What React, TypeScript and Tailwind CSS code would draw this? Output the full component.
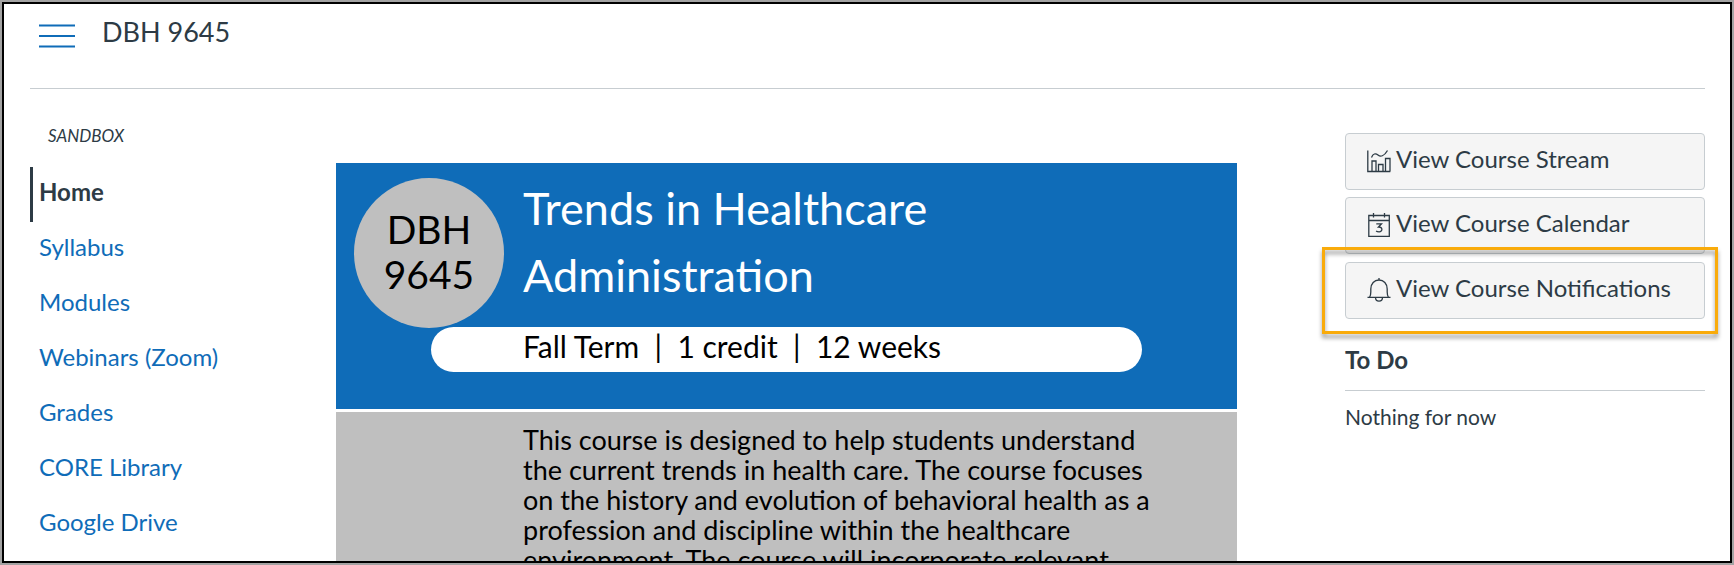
const navItems = ["Home", "Syllabus", "Modules", "Webinars (Zoom)", "Grades", "CORE Library", "Google Drive"];

export default function App() {
  return (
    <div className="h-screen overflow-hidden border-2 border-[#a3a3a3] bg-white font-['Lato',sans-serif] text-[#2d3b45]">
      <div className="h-full overflow-hidden border-2 border-black pl-[26px] pr-[25px]">
        {/* Header */}
        <header className="flex h-[85px] items-start gap-[27px] border-b border-[#c7cdd1] pl-[9px] pt-3">
          <button type="button" aria-label="Toggle course navigation" className="mt-2 h-6 w-9 text-[#0f6cb8]">
            <svg viewBox="0 0 36 24" className="h-6 w-9" stroke="currentColor" strokeWidth="2">
              <path d="M0 1.5h36M0 12h36M0 22.5h36" />
            </svg>
          </button>
          <h1 className="text-[27px] leading-8">DBH 9645</h1>
        </header>

        <div className="flex">
          <CourseNav />
          <main className="mt-[74px] min-w-0 flex-1 text-black">
            <Banner />
            <div className="mt-[3px] bg-[#bfbfbf] pb-6 pl-[187px] pr-[75px] pt-[13px]">
              <p className="text-[27px] leading-[30px]">
                This course is designed to help students understand the current trends in health care. The course
                focuses on the history and evolution of behavioral health as a profession and discipline within the
                healthcare environment. The course will incorporate relevant
              </p>
            </div>
          </main>
          <Sidebar />
        </div>
      </div>
    </div>
  );
}

function CourseNav() {
  return (
    <nav className="w-[306px] shrink-0 pt-[35px]">
      <p className="mb-[19px] pl-[18px] text-[17px] italic leading-6">SANDBOX</p>
      <ul>
        {navItems.map((item, i) => (
          <li key={item}>
            <a href="#" aria-current={i === 0 ? "page" : undefined}
              className={`block border-l-[3px] pl-1.5 pb-1.5 text-2xl leading-[49px] ${i === 0 ? "border-[#2d3b45] font-bold text-[#2d3b45]" : "border-transparent text-[#0f6cb8]"}`}>
              {item}
            </a>
          </li>
        ))}
      </ul>
    </nav>
  );
}

function Banner() {
  return (
    <section className="bg-[#0f6cb8] pb-[37px]">
      <div className="flex gap-[19px] pl-[18px]">
        <div className="mt-[15px] flex size-[150px] shrink-0 items-center justify-center rounded-full bg-[#bfbfbf] pb-0.5 text-center text-[39px] leading-[45px]">
          DBH<br />9645
        </div>
        <h2 className="max-w-[500px] pt-3 text-[45px] leading-[67px] text-white">Trends in Healthcare Administration</h2>
      </div>
      <p className="mx-[95px] -mt-px whitespace-pre rounded-full bg-white pb-1.5 pl-[92px] text-[30px] leading-[39px]">
        {"Fall Term  |  1 credit  |  12 weeks"}
      </p>
    </section>
  );
}

function Sidebar() {
  const buttonClass =
    "flex h-[57px] w-full items-center gap-[5px] rounded border border-[#c7cdd1] bg-[#f5f5f5] pb-1.5 pl-[21px] text-2xl";
  return (
    <aside className="ml-[108px] w-[360px] shrink-0 pt-11">
      <div className="flex flex-col gap-[7px]">
        <button type="button" className={buttonClass}><StreamIcon />View Course Stream</button>
        <button type="button" className={buttonClass}><CalendarIcon />View Course Calendar</button>
        <div className="relative pt-px">
          <button type="button" className={buttonClass}><BellIcon />View Course Notifications</button>
          {/* Callout around the notifications button */}
          <div className="pointer-events-none absolute -bottom-[15px] -left-[23px] -right-[13px] -top-[14px] border-[3px] border-[#f9ab0b] drop-shadow-[0_4px_2px_rgba(0,0,0,0.4)]" />
        </div>
      </div>
      <h2 className="mt-4 border-b border-[#c7cdd1] pb-[14px] pt-[9px] text-2xl font-bold leading-8">To Do</h2>
      <p className="mt-2.5 text-[21px] leading-8">Nothing for now</p>
    </aside>
  );
}

function StreamIcon() {
  return (
    <svg viewBox="0 0 24 24" className="mt-1 size-6" fill="none" stroke="currentColor" strokeWidth="1.3">
      <path d="M.8 1.5v21h22.5M5 22.500V12h4v10.500M11.500 22.500V15.500h4.500v7M18.500 22.500V9.500h4.500v13" />
      <path d="M4.500 8.500c1.500-4 4-4.500 6.500-2.500 2.500 2 6 1.500 9.500-4.500" />
    </svg>
  );
}

function CalendarIcon() {
  return (
    <svg viewBox="0 0 24 24" className="mt-1 size-6" fill="none" stroke="currentColor" strokeWidth="1.3">
      <path d="M1.800 2.500h20.500v20.800H1.800zM1.800 7.500h20.500M6.500 0v4.500M17.500 0v4.500" />
      <path d="M9.300 10.800h5.200l-3 3.200c4.500-.3 4.300 4.800.6 4.800-1.300 0-2.300-.3-3-.9" />
    </svg>
  );
}

function BellIcon() {
  return (
    <svg viewBox="0 0 24 24" className="mt-1 size-6" fill="none" stroke="currentColor" strokeWidth="1.3">
      <path d="M.5 19.300h23M2.500 19.300c1-1.300 1.300-3 1.300-5.300v-3c0-5.500 3.500-9 8.200-9s8.200 3.500 8.200 9v3c0 2.300.3 4 1.300 5.300M12 2V0M8.500 19.300c0 2.300 1.500 3.900 3.500 3.900s3.500-1.600 3.500-3.900" />
    </svg>
  );
}
